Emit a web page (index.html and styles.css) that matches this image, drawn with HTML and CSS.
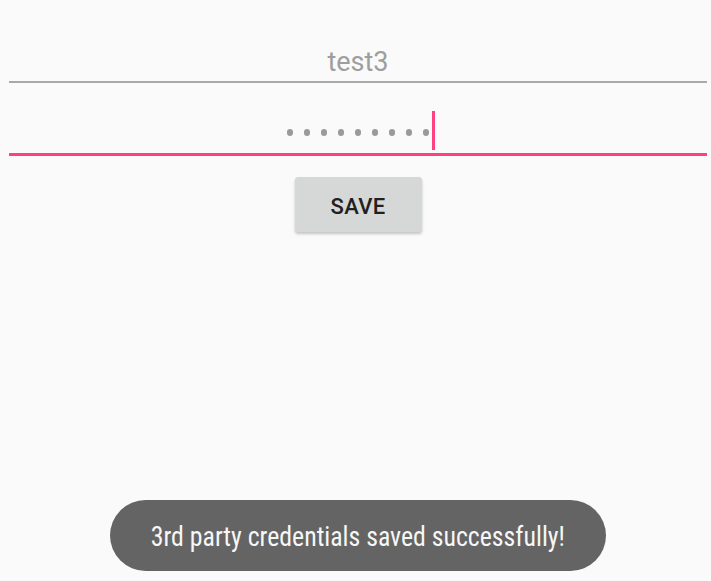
FILE: index.html
```html
<!DOCTYPE html>
<html lang="en">
<head>
<meta charset="utf-8">
<title>Credentials</title>
<link rel="stylesheet" href="styles.css">
</head>
<body>
<div class="screen">
  <div class="field field-user">
    <span class="field-text">test3</span>
  </div>
  <div class="field field-pass">
    <div class="dots">
      <span class="dot"></span><span class="dot"></span><span class="dot"></span>
      <span class="dot"></span><span class="dot"></span><span class="dot"></span>
      <span class="dot"></span><span class="dot"></span><span class="dot"></span>
      <span class="cursor"></span>
    </div>
  </div>
  <div class="actions">
    <button class="btn-save" type="button">SAVE</button>
  </div>
  <div class="toast">
    <span class="toast-text">3rd party credentials saved successfully!</span>
  </div>
</div>
</body>
</html>
```
FILE: styles.css
```css
html, body {
  margin: 0;
  padding: 0;
  background: #fafafa;
}
body {
  font-family: Roboto, "Noto Sans", sans-serif;
}
.screen {
  display: flex;
  flex-direction: column;
  align-items: stretch;
  min-height: 581px;
  box-sizing: border-box;
  padding: 0 4px 10px 9px;
}
.field {
  display: flex;
  justify-content: center;
}
.field-user {
  padding: 46px 0 3px;
  border-bottom: 2px solid #a9a9a9;
}
.field-text {
  font-size: 27px;
  line-height: 32px;
  color: #9e9e9e;
}
.field-pass {
  padding: 28px 0 3px;
  border-bottom: 3px solid #ff4081;
}
.dots {
  position: relative;
  display: flex;
  align-items: center;
  gap: 10.5px;
  height: 39px;
}
.dot {
  width: 6.5px;
  height: 6.5px;
  border-radius: 50%;
  background: #9a9a9a;
  margin-top: 4px;
}
.cursor {
  position: absolute;
  top: 0;
  right: -6px;
  width: 3px;
  height: 39px;
  background: #ff4081;
}
.actions {
  display: flex;
  justify-content: center;
  padding-top: 21px;
}
.btn-save {
  width: 127px;
  height: 55px;
  border: none;
  border-radius: 3px;
  background: #d6d7d7;
  box-shadow: 0 2px 3px rgba(0, 0, 0, 0.22);
  font-family: Roboto, sans-serif;
  font-weight: 500;
  font-size: 22px;
  color: #212121;
  letter-spacing: 0.3px;
  padding: 3px 0 0;
}
.toast {
  margin-top: auto;
  align-self: center;
  width: 496px;
  height: 71px;
  border-radius: 36px;
  background: #646464;
  display: flex;
  align-items: center;
  justify-content: center;
}
.toast-text {
  display: inline-block;
  white-space: nowrap;
  font-family: "Roboto Condensed", Roboto, sans-serif;
  font-size: 27px;
  color: #f7f7f7;
  margin-top: 2px;
  transform: scaleX(0.955);
}
```
